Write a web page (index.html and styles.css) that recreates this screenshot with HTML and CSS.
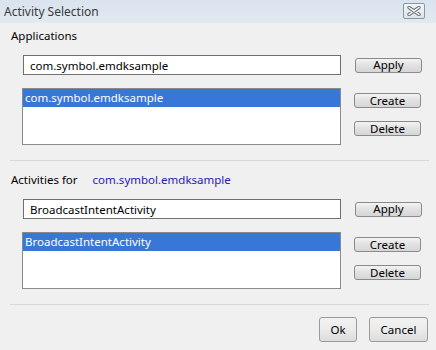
FILE: index.html
```html
<!DOCTYPE html>
<html lang="en">
<head>
<meta charset="UTF-8">
<title>Activity Selection</title>
<link rel="stylesheet" href="styles.css">
</head>
<body>

<div class="dialog">
  <div class="title-bar">
    <span class="title-text">Activity Selection</span>
    <button class="close-btn" aria-label="Close">
      <svg width="14" height="10" viewBox="0 0 14 10">
        <path d="M2 1.5 L12 8.5 M12 1.5 L2 8.5" stroke="#6b7480" stroke-width="3.4" stroke-linecap="round"/>
        <path d="M2 1.5 L12 8.5 M12 1.5 L2 8.5" stroke="#ffffff" stroke-width="1.5" stroke-linecap="round"/>
      </svg>
    </button>
  </div>

  <div class="content">
    <div class="group">
      <div class="group-label">Applications</div>
      <div class="row">
        <input class="field" type="text" value="com.symbol.emdksample">
        <button class="btn">Apply</button>
      </div>
      <div class="row list-row">
        <div class="list">
          <div class="list-item selected">com.symbol.emdksample</div>
        </div>
        <div class="actions">
          <button class="btn">Create</button>
          <button class="btn">Delete</button>
        </div>
      </div>
    </div>

    <div class="separator"></div>

    <div class="group">
      <div class="group-label after-sep">Activities for<span class="link">com.symbol.emdksample</span></div>
      <div class="row">
        <input class="field" type="text" value="BroadcastIntentActivity">
        <button class="btn">Apply</button>
      </div>
      <div class="row list-row">
        <div class="list">
          <div class="list-item selected">BroadcastIntentActivity</div>
        </div>
        <div class="actions">
          <button class="btn">Create</button>
          <button class="btn">Delete</button>
        </div>
      </div>
    </div>

    <div class="separator"></div>

    <div class="footer">
      <button class="btn btn-large ok">Ok</button>
      <button class="btn btn-large cancel">Cancel</button>
    </div>
  </div>
</div>

</body>
</html>
```

FILE: styles.css
```css
/* Dialog frame */
body {
  margin: 0;
  background-color: #f0f0f0;
  font-family: "Noto Sans", "Open Sans", sans-serif;
  font-size: 11.5px;
  color: #000;
}

.dialog {
  width: 436px;
  height: 350px;
  background-color: #f0f0f0;
}

/* Title bar */
.title-bar {
  height: 23px;
  display: flex;
  align-items: center;
  justify-content: space-between;
  padding: 0 11px 0 4px;
  background: linear-gradient(to bottom, #d9e3ee, #e2e9f1);
}

.title-text {
  color: #3a3a3a;
  font-size: 12px;
  margin-top: -1px;
}

.close-btn {
  width: 22px;
  height: 16px;
  margin-top: -2px;
  padding: 0;
  display: flex;
  align-items: center;
  justify-content: center;
  border: 1px solid #8a96a3;
  border-radius: 2px;
  background: linear-gradient(to bottom, #f4f6f8, #dfe4ea);
}

/* Content */
.content {
  padding: 0 7px 0 10px;
}

.group-label {
  margin-top: 5px;
  padding-left: 1px;
  height: 16px;
  line-height: 16px;
}

.group-label.after-sep {
  margin-top: 11px;
}

.link {
  color: #2121b5;
  margin-left: 15px;
}

.row {
  display: flex;
  align-items: center;
  padding-left: 12px;
  margin-top: 11px;
}

.list-row {
  align-items: flex-start;
  margin-top: 13px;
}

/* Inputs */
.field {
  box-sizing: border-box;
  width: 318px;
  height: 20px;
  margin: 0 14px 0 1px;
  padding: 0 0 0 6px;
  border: 1px solid #6f6f6f;
  background-color: #fff;
  font-family: inherit;
  font-size: 11.5px;
  color: #000;
}

.list {
  box-sizing: border-box;
  width: 319px;
  height: 57px;
  margin-right: 13px;
  border: 1px solid #8a8a8a;
  background-color: #fff;
}

.list-item {
  height: 18px;
  line-height: 17px;
  padding-left: 2px;
}

.list-item.selected {
  background-color: #3876d8;
  color: #fff;
}

.actions {
  display: flex;
  flex-direction: column;
  gap: 13px;
  padding-top: 5px;
}

/* Buttons */
.btn {
  box-sizing: border-box;
  width: 67px;
  height: 15px;
  padding: 0;
  border: 1px solid #8a8a8a;
  border-radius: 3px;
  background: linear-gradient(to bottom, #f3f3f3, #e1e1e1 50%, #d6d6d6);
  font-family: inherit;
  font-size: 11.5px;
  line-height: 12px;
  color: #000;
}

.separator {
  height: 1px;
  background-color: #d8d8d8;
  margin-top: 15px;
}

.footer {
  display: flex;
  justify-content: flex-end;
  gap: 12px;
  margin-top: 12px;
  padding-right: 1px;
}

.btn-large {
  height: 25px;
  line-height: 22px;
  border-color: #9a9a9a;
  background: linear-gradient(to bottom, #f2f2f2, #ebebeb 50%, #dcdcdc);
}

.ok {
  width: 38px;
}

.cancel {
  width: 59px;
}
```
